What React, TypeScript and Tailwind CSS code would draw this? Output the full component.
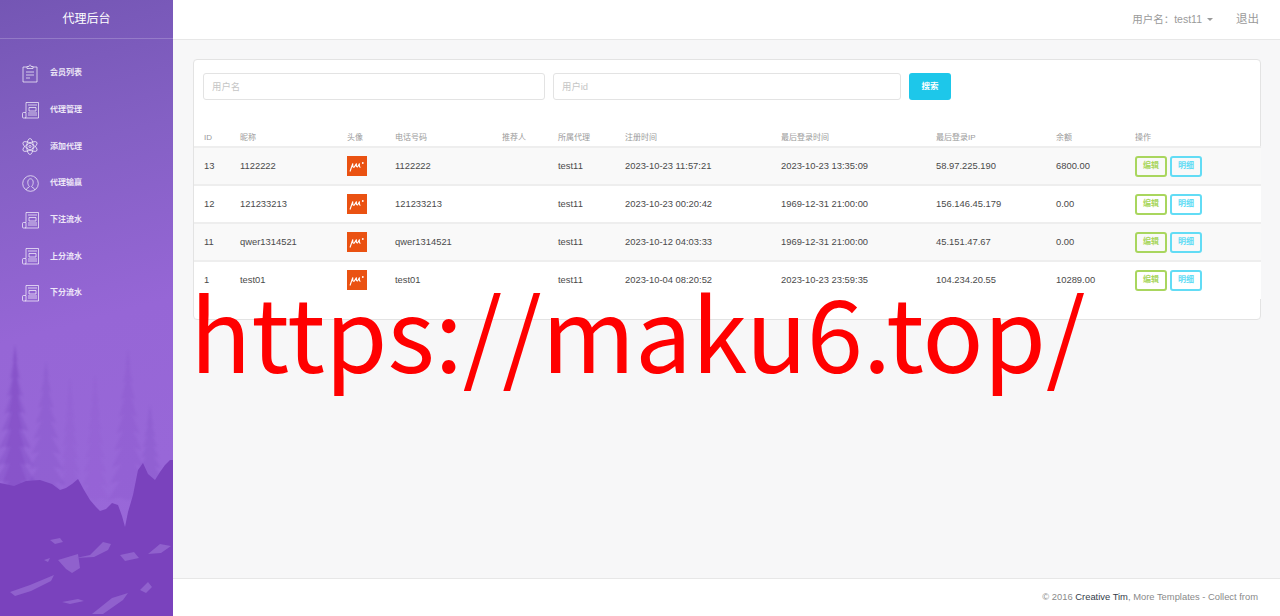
import React from 'react';

type Row = {
  id: string;
  nick: string;
  phone: string;
  agent: string;
  reg: string;
  login: string;
  ip: string;
  balance: string;
};

const rows: Row[] = [
  { id: '13', nick: '1122222', phone: '1122222', agent: 'test11', reg: '2023-10-23 11:57:21', login: '2023-10-23 13:35:09', ip: '58.97.225.190', balance: '6800.00' },
  { id: '12', nick: '121233213', phone: '121233213', agent: 'test11', reg: '2023-10-23 00:20:42', login: '1969-12-31 21:00:00', ip: '156.146.45.179', balance: '0.00' },
  { id: '11', nick: 'qwer1314521', phone: 'qwer1314521', agent: 'test11', reg: '2023-10-12 04:03:33', login: '1969-12-31 21:00:00', ip: '45.151.47.67', balance: '0.00' },
  { id: '1', nick: 'test01', phone: 'test01', agent: 'test11', reg: '2023-10-04 08:20:52', login: '2023-10-23 23:59:35', ip: '104.234.20.55', balance: '10289.00' },
];

const headers = ['ID', '昵称', '头像', '电话号码', '推荐人', '所属代理', '注册时间', '最后登录时间', '最后登录IP', '余额', '操作'];
const colWidths = ['w-[36px]', 'w-[107px]', 'w-[48px]', 'w-[107px]', 'w-[56px]', 'w-[67px]', 'w-[156px]', 'w-[155px]', 'w-[120px]', 'w-[79px]', 'w-[136px]'];

const ClipboardIcon = () => (
  <svg width="16" height="19" viewBox="0 0 16 19" fill="none" stroke="currentColor" strokeWidth="0.8">
    <path d="M5 3H1v15h14V3h-4" />
    <path d="M5 4.500V2.500h2c0-2 2-2 2 0h2v2z" />
    <path d="M4 8h8M4 11h8M4 14h4" />
  </svg>
);

const NewsIcon = () => (
  <svg width="17" height="17" viewBox="0 0 17 17" fill="none" stroke="currentColor" strokeWidth="0.8">
    <path d="M4 10V.5h12.500v15.500H3" />
    <path d="M4 10.500H1.500a1 1 0 0 0-1 1V15a1 1 0 0 0 1 1H3a1 1 0 0 0 1-1v-4.500z" />
    <path d="M6 3h9M7 5.500h7V9H7zM6 11h9M6 13h9" />
  </svg>
);

const AtomIcon = () => (
  <svg width="16" height="17" viewBox="0 0 16 17" fill="none" stroke="currentColor" strokeWidth="0.8">
    <ellipse cx="8" cy="8.500" rx="3.200" ry="8" />
    <ellipse cx="8" cy="8.500" rx="3.200" ry="8" transform="rotate(60 8 8.500)" />
    <ellipse cx="8" cy="8.500" rx="3.200" ry="8" transform="rotate(-60 8 8.500)" />
    <circle cx="8" cy="8.500" r="1.100" />
  </svg>
);

const UserIcon = () => (
  <svg width="17" height="17" viewBox="0 0 17 17" fill="none" stroke="currentColor" strokeWidth="0.8">
    <circle cx="8.500" cy="8.500" r="7.800" />
    <path d="M4.500 14.800c0-2.200 2.800-2.200 3-3.400C6.200 10.400 5.800 8.800 5.800 7.200 5.800 5.200 7 3.800 8.500 3.800s2.700 1.400 2.700 3.400c0 1.600-.4 3.200-1.700 4.200.2 1.200 3 1.200 3 3.400" />
  </svg>
);

const menu = [
  { label: '会员列表', icon: <ClipboardIcon /> },
  { label: '代理管理', icon: <NewsIcon /> },
  { label: '添加代理', icon: <AtomIcon /> },
  { label: '代理输赢', icon: <UserIcon /> },
  { label: '下注流水', icon: <NewsIcon /> },
  { label: '上分流水', icon: <NewsIcon /> },
  { label: '下分流水', icon: <NewsIcon /> },
];

// jagged conifer outline, tip at (x, top), down to bottom
const tree = (x: number, top: number, bottom: number, spread: number) => {
  const steps = 9;
  const h = (bottom - top) / steps;
  let left = '';
  let right = `M${x} ${top}`;
  for (let i = 1; i <= steps; i++) {
    const w = (spread * i) / steps;
    const y = top + h * i;
    right += `L${x + w} ${y}L${x + w * 0.45} ${y - h * 0.15}`;
    left = `L${x - w * 0.45} ${y - h * 0.15}L${x - w} ${y}` + left;
  }
  return `${right}L${x} ${bottom}${left}Z`;
};

const Forest = () => (
  <svg className="absolute inset-0 w-full h-full" viewBox="0 0 173 616" preserveAspectRatio="none">
    <g fill="#7a44c0" className="blur-[1px]">
      <path fillOpacity="0.08" d={tree(95, 375, 500, 14)} />
      <path fillOpacity="0.09" d={tree(70, 378, 500, 12)} />
      <path fillOpacity="0.16" d={tree(128, 350, 500, 20)} />
      <path fillOpacity="0.2" d={tree(46, 362, 500, 22)} />
      <path fillOpacity="0.3" d={tree(15, 345, 500, 24)} />
      <path fillOpacity="0.35" d={tree(15, 345, 500, 14)} />
      <path fillOpacity="0.2" d={tree(150, 405, 500, 16)} />
    </g>
    <path
      fill="#7a42bd"
      className="blur-[0.6px]"
      d="M0 483L14 486L26 481L40 480L52 484L60 490L66 488L72 484L78 479L84 490L90 500L96 507L100 511L106 509L112 503L118 505L122 516L125 527L128 512L133 495L138 470L143 463L148 474L155 480L160 472L165 465L170 460L173 460V616H0Z"
    />
    <path
      fill="#a57fdd"
      fillOpacity="0.5"
      className="blur-[0.6px]"
      d="M50 540L60 538L63 542L55 544ZM76 558L90 555L103 542L111 544L108 550L94 557ZM120 555L134 552L139 558L125 561ZM148 554L160 544L171 546L161 553ZM58 560L78 554L80 568L72 573L66 569ZM10 592L30 585L54 575L51 581L31 591L15 596ZM62 602L78 599L84 601L70 604ZM92 614L112 598L128 593L123 600L103 614ZM140 590L148 582L152 587L146 593ZM44 560L50 558L48 562Z"
    />
  </svg>
);

const AvatarLogo = () => (
  <svg width="20" height="20" viewBox="0 0 20 20" className="block">
    <rect width="20" height="20" fill="#ea5212" />
    <path d="M3 15.500l2.800-8c-.3 3 .2 4.500 1.500 3.500l2.200-3.500c-.4 2.600 0 3.800 1.200 3.200l1.800-3.200c-.4 2.500-.1 4 1 3.500" fill="none" stroke="#fff" strokeWidth="1.100" />
    <circle cx="15.800" cy="7" r="0.9" fill="#fff" />
  </svg>
);

export default function App() {
  return (
    <div className="relative flex h-screen w-full overflow-hidden bg-[#f7f7f8] text-[9.4px] text-[#4a4a4a] font-['Liberation_Sans','Noto_Sans_CJK_SC',sans-serif]">
      {/* Sidebar */}
      <aside className="relative w-[173px] shrink-0 overflow-hidden bg-[linear-gradient(165deg,#7456b4_0%,#8460c4_25%,#9666d6_52%,#9a68da_100%)] text-white">
        <Forest />
        <div className="relative">
          <div className="h-[39px] border-b border-white/20 flex items-center justify-center text-[12px]">代理后台</div>
          <ul className="pt-[16px]">
            {menu.map((item) => (
              <li key={item.label} className="h-[36.7px] flex items-center pl-[21px] gap-[11px] text-white/85">
                <span className="w-[18px] flex justify-center">{item.icon}</span>
                <span className="text-[8px] font-bold">{item.label}</span>
              </li>
            ))}
          </ul>
        </div>
      </aside>

      {/* Main */}
      <div className="flex-1 flex flex-col min-w-0">
        <header className="h-[40px] shrink-0 bg-white border-b border-[#e7e7e7] flex items-center justify-end pr-[21px] text-[10.5px] text-[#9a9a9a]">
          <span>用户名：test11</span>
          <span className="ml-[5px] w-0 h-0 border-x-[3px] border-x-transparent border-t-[3px] border-t-[#9a9a9a]" />
          <span className="ml-[23px] text-[11.5px]">退出</span>
        </header>

        <main className="flex-1 pl-[20px] pr-[19px] pt-[19px]">
          <section className="bg-white rounded-[4px] border border-[#e3e3e3] h-[261px]">
            <div className="flex items-center pl-[9px] pt-[13px] gap-[8px]">
              <input placeholder="用户名" className="w-[342px] h-[27px] border border-[#e3e3e3] rounded-[3px] px-[8px] text-[9.4px] placeholder:text-[#c5c5c5]" />
              <input placeholder="用户id" className="w-[348px] h-[27px] border border-[#e3e3e3] rounded-[3px] px-[8px] text-[9.4px] placeholder:text-[#c5c5c5]" />
              <button className="w-[42px] h-[27px] rounded-[3px] bg-[#1dc7ea] text-white text-[8.5px] font-bold">搜索</button>
            </div>
            <table className="w-full table-fixed mt-[23px] border-collapse">
              <colgroup>
                {colWidths.map((w, i) => (
                  <col key={i} className={w} />
                ))}
              </colgroup>
              <thead>
                <tr className="h-[24px] border-b-2 border-[#eeeeee]">
                  {headers.map((h) => (
                    <th key={h} className="pl-[10px] pt-[6px] text-left font-normal text-[8px] text-[#9a9a9a]">{h}</th>
                  ))}
                </tr>
              </thead>
              <tbody>
                {rows.map((r, i) => (
                  <tr key={r.id} className={`h-[38px] border-b-2 ${i < rows.length - 1 ? 'border-[#eeeeee]' : 'border-transparent'} ${i % 2 === 0 ? 'bg-[#f9f9f9]' : 'bg-white'}`}>
                    <td className="pl-[10px]">{r.id}</td>
                    <td className="pl-[10px]">{r.nick}</td>
                    <td className="pl-[10px]"><AvatarLogo /></td>
                    <td className="pl-[10px]">{r.phone}</td>
                    <td className="pl-[10px]"></td>
                    <td className="pl-[10px]">{r.agent}</td>
                    <td className="pl-[10px]">{r.reg}</td>
                    <td className="pl-[10px]">{r.login}</td>
                    <td className="pl-[10px]">{r.ip}</td>
                    <td className="pl-[10px]">{r.balance}</td>
                    <td className="pl-[10px]">
                      <div className="flex gap-[3px]">
                        <button className="w-[32px] h-[21px] border-2 border-[#a9d65e] rounded-[3px] text-[#a9d65e] text-[8px] font-bold">编辑</button>
                        <button className="w-[32px] h-[21px] border-2 border-[#62dcf5] rounded-[3px] text-[#62dcf5] text-[8px] font-bold">明细</button>
                      </div>
                    </td>
                  </tr>
                ))}
              </tbody>
            </table>
          </section>
        </main>

        <footer className="h-[38px] shrink-0 bg-white border-t border-[#e7e7e7] flex items-center justify-end pr-[22px] text-[9.4px] text-[#8a8a8a]">
          <span>© 2016 <span className="text-[#333c4a]">Creative Tim</span>, More Templates - Collect from</span>
        </footer>
      </div>

      {/* Watermark over the page */}
      <div className="absolute left-[190px] top-[254px] text-[#ff0000] text-[100.8px] leading-[150px] whitespace-nowrap font-['Noto_Sans_CJK_SC',sans-serif]">https://maku6.top/</div>
    </div>
  );
}
